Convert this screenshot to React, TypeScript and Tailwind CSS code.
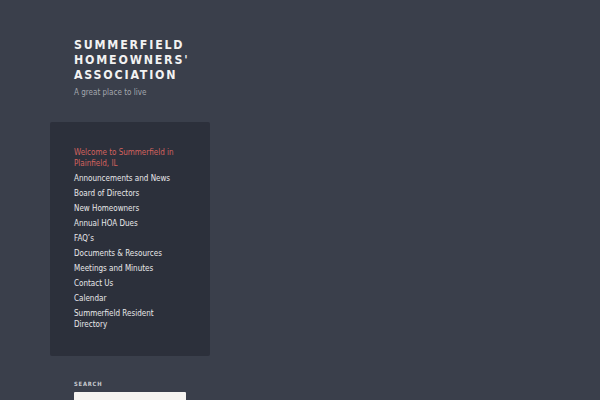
const links = [
  'Announcements and News',
  'Board of Directors',
  'New Homeowners',
  'Annual HOA Dues',
  'FAQ’s',
  'Documents & Resources',
  'Meetings and Minutes',
  'Contact Us',
  'Calendar',
  'Summerfield Resident Directory',
];

export default function App() {
  return (
    <div
      className="min-h-[400px] w-full bg-[#3a3f4b] pl-[50px] pt-[38px]"
      style={{ fontFamily: '"DejaVu Sans Condensed", "DejaVu Sans", Verdana, sans-serif' }}
    >
      <div className="w-[160px]">
        {/* Site branding */}
        <div className="pl-6">
          <h1 className="text-[12.3px] font-bold uppercase leading-[15px] tracking-[1.8px] text-[#f2f2f2] whitespace-nowrap">
            Summerfield
            <br />
            Homeowners'
            <br />
            Association
          </h1>
          <p className="mt-[4px] text-[8px] leading-[11px] text-[#a3a7ae]">A great place to live</p>
        </div>

        {/* Menu */}
        <nav className="mt-[24px] rounded-[2px] bg-[#2c303b] px-6 pb-[26px] pt-[25px]">
          <ul className="flex flex-col gap-[4px] text-[8px] leading-[11px]">
            <li>
              <a className="text-[#d4625e]">Welcome to Summerfield in Plainfield, IL</a>
            </li>
            {links.map((l) => (
              <li key={l}>
                <a className="text-[#e8e8ea]">{l}</a>
              </li>
            ))}
          </ul>
        </nav>

        {/* Search widget */}
        <div className="mt-[24px] pl-6">
          <div className="text-[5.8px] font-bold uppercase tracking-[0.8px] text-[#c9ccd1]">Search</div>
          <div className="mt-[3px] h-[20px] w-[112px] rounded-[1px] bg-[#f6f4f1]"></div>
        </div>
      </div>
    </div>
  );
}
